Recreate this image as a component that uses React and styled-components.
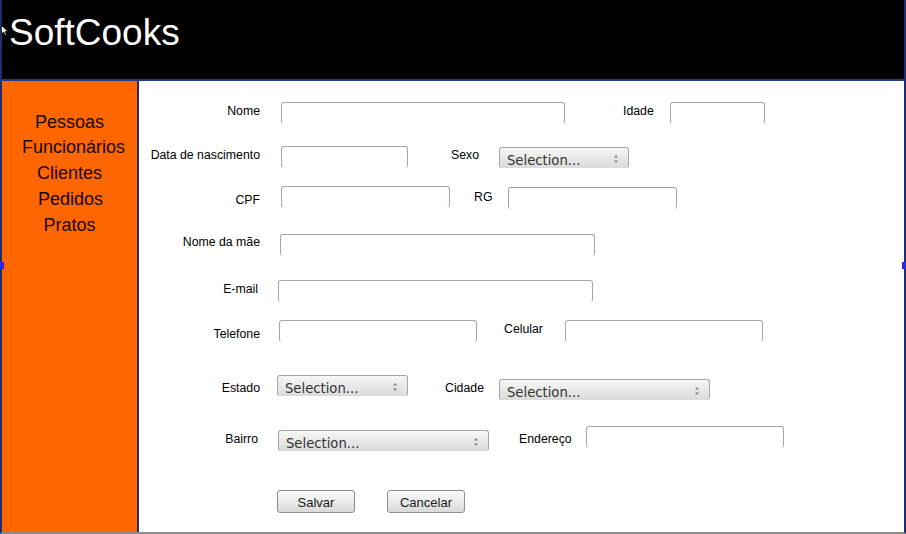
import React from 'react';
import styled, { createGlobalStyle } from 'styled-components';

const Global = createGlobalStyle`
  html, body { margin: 0; padding: 0; background: #ffffff; }
  body { font-family: "Liberation Sans", Arial, sans-serif; }
`;

const Frame = styled.div`
  position: relative;
  width: 906px;
  height: 534px;
  box-sizing: border-box;
  border-left: 2px solid #1f2f6e;
  border-right: 2px solid #1f2f6e;
  border-bottom: 2px solid #8c8c8c;
  display: flex;
  flex-direction: column;
  background: #ffffff;
`;

const Header = styled.header`
  flex-shrink: 0;
  background: #000000;
  border-bottom: 2px solid #1f3a85;
  padding: 14px 0 0 7px;
  box-sizing: content-box;
  height: 65px;
  position: relative;
`;

const Title = styled.h1`
  margin: 0;
  font-family: "Liberation Sans", Arial, sans-serif;
  font-weight: normal;
  font-size: 37px;
  line-height: 37px;
  color: #ffffff;
`;

const Cursor = styled.svg`
  position: absolute;
  left: -1px;
  top: 25px;
`;

const Handle = styled.span`
  position: absolute;
  top: 262px;
  ${(p) => (p.$side === 'left' ? 'left: -2px;' : 'right: -2px;')}
  width: 4px;
  height: 7px;
  background: #2a2ad6;
`;

const Body = styled.div`
  flex: 1;
  display: flex;
  min-height: 0;
`;

const Sidebar = styled.nav`
  width: 135px;
  flex-shrink: 0;
  background: #ff6600;
  border-right: 2px solid #1f2f6e;
  padding-top: 28.5px;
  display: flex;
  flex-direction: column;
  align-items: center;
`;

const NavItem = styled.div`
  font-size: 18px;
  line-height: 25.9px;
  color: #140800;
  transform: translateX(${(p) => p.$dx || 0}px);
`;

const Content = styled.main`
  flex: 1;
  padding-top: 21px;
  display: flex;
  flex-direction: column;
`;

const Row = styled.div`
  display: flex;
  align-items: flex-start;
  height: ${(p) => p.$h}px;
  flex-shrink: 0;
`;

const Label = styled.span`
  flex-shrink: 0;
  width: ${(p) => p.$w}px;
  margin-left: ${(p) => p.$ml || 0}px;
  margin-top: ${(p) => p.$mt || 0}px;
  padding-right: ${(p) => p.$pr || 0}px;
  box-sizing: border-box;
  text-align: ${(p) => (p.$right ? 'right' : 'left')};
  font-size: 12.3px;
  line-height: 14px;
  color: #000000;
  white-space: nowrap;
`;

const Field = styled.input`
  flex-shrink: 0;
  box-sizing: border-box;
  width: ${(p) => p.$w}px;
  height: 22px;
  margin: ${(p) => p.$mt || 0}px 0 0 ${(p) => p.$ml || 0}px;
  padding: 0 4px;
  border: 1px solid #a8a8a2;
  border-bottom: none;
  border-radius: 3px;
  background: #ffffff;
  outline: none;
  font-family: "Liberation Sans", Arial, sans-serif;
  font-size: 12px;
`;

const Select = styled.div`
  flex-shrink: 0;
  box-sizing: border-box;
  width: ${(p) => p.$w}px;
  height: 21px;
  margin: ${(p) => p.$mt || 0}px 0 0 ${(p) => p.$ml || 0}px;
  padding: 5px 9px 0 7px;
  display: flex;
  justify-content: space-between;
  align-items: flex-start;
  border: 1px solid #a6a6a6;
  border-bottom: none;
  border-radius: 3px;
  background: linear-gradient(#f7f7f7, #dadada);
  font-family: "DejaVu Sans", Verdana, sans-serif;
  font-size: 13.2px;
  line-height: 16px;
  color: #333333;
  overflow: hidden;
`;

const Arrows = styled.svg`
  margin-top: 1px;
  flex-shrink: 0;
`;

const Button = styled.button`
  flex-shrink: 0;
  box-sizing: border-box;
  width: 78px;
  height: 23px;
  margin-left: ${(p) => p.$ml || 0}px;
  padding: 1px 0 0;
  border: 1px solid #8f8f8f;
  border-radius: 3px;
  background: linear-gradient(#fbfbfb, #d9d9d9);
  font-family: "Liberation Sans", Arial, sans-serif;
  font-size: 13px;
  color: #1a1a1a;
`;

const Combo = ({ w, ml, mt }) => (
  <Select $w={w} $ml={ml} $mt={mt}>
    <span>Selection...</span>
    <Arrows width="6" height="10" viewBox="0 0 6 10">
      <path d="M3 1 L5 3.5 H1 Z" fill="#808080" />
      <path d="M3 9 L5 6.5 H1 Z" fill="#808080" />
    </Arrows>
  </Select>
);

const navItems = [
  { t: 'Pessoas', dx: 0 },
  { t: 'Funcionários', dx: 4 },
  { t: 'Clientes', dx: 0 },
  { t: 'Pedidos', dx: 1 },
  { t: 'Pratos', dx: 0 },
];

export default function App() {
  return (
    <>
      <Global />
      <Frame>
        <Header>
          <Title>SoftCooks</Title>
          <Cursor width="8" height="11" viewBox="0 0 8 11">
            <path d="M0.5 0.5 L0.5 9 L2.6 7 L4.2 10.3 L5.5 9.7 L4 6.6 L7 6.6 Z" fill="#ffffff" stroke="#000" strokeWidth="0.7" />
          </Cursor>
        </Header>
        <Body>
          <Sidebar>
            {navItems.map((n) => (
              <NavItem key={n.t} $dx={n.dx}>{n.t}</NavItem>
            ))}
          </Sidebar>
          <Content>
            <Row $h={44}>
              <Label $w={121} $right $mt={2}>Nome</Label>
              <Field $w={284} $ml={21} />
              <Label $w={47} $ml={58} $mt={2}>Idade</Label>
              <Field $w={95} />
            </Row>
            <Row $h={40}>
              <Label $w={121} $right $mt={2}>Data de nascimento</Label>
              <Field $w={127} $ml={21} />
              <Label $w={48} $ml={43} $mt={2}>Sexo</Label>
              <Combo w={130} mt={1} />
            </Row>
            <Row $h={48}>
              <Label $w={121} $right $mt={7}>CPF</Label>
              <Field $w={169} $ml={21} />
              <Label $w={34} $ml={24} $mt={4}>RG</Label>
              <Field $w={169} $mt={1} />
            </Row>
            <Row $h={46}>
              <Label $w={121} $right $mt={1}>Nome da mãe</Label>
              <Field $w={315} $ml={20} />
            </Row>
            <Row $h={40}>
              <Label $w={121} $right $mt={2} $pr={2}>E-mail</Label>
              <Field $w={315} $ml={18} />
            </Row>
            <Row $h={55}>
              <Label $w={121} $right $mt={7}>Telefone</Label>
              <Field $w={198} $ml={19} />
              <Label $w={61} $ml={27} $mt={2}>Celular</Label>
              <Field $w={198} />
            </Row>
            <Row $h={51}>
              <Label $w={121} $right $mt={6}>Estado</Label>
              <Combo w={131} ml={17} />
              <Label $w={54} $ml={37} $mt={6}>Cidade</Label>
              <Combo w={211} mt={4} />
            </Row>
            <Row $h={64}>
              <Label $w={121} $right $mt={6} $pr={2}>Bairro</Label>
              <Combo w={211} ml={18} mt={4} />
              <Label $w={67} $ml={30} $mt={6}>Endereço</Label>
              <Field $w={198} />
            </Row>
            <Row $h={23}>
              <Label $w={121} />
              <Button $ml={17}>Salvar</Button>
              <Button $ml={32}>Cancelar</Button>
            </Row>
          </Content>
        </Body>
        <Handle $side="left" />
        <Handle $side="right" />
      </Frame>
    </>
  );
}
